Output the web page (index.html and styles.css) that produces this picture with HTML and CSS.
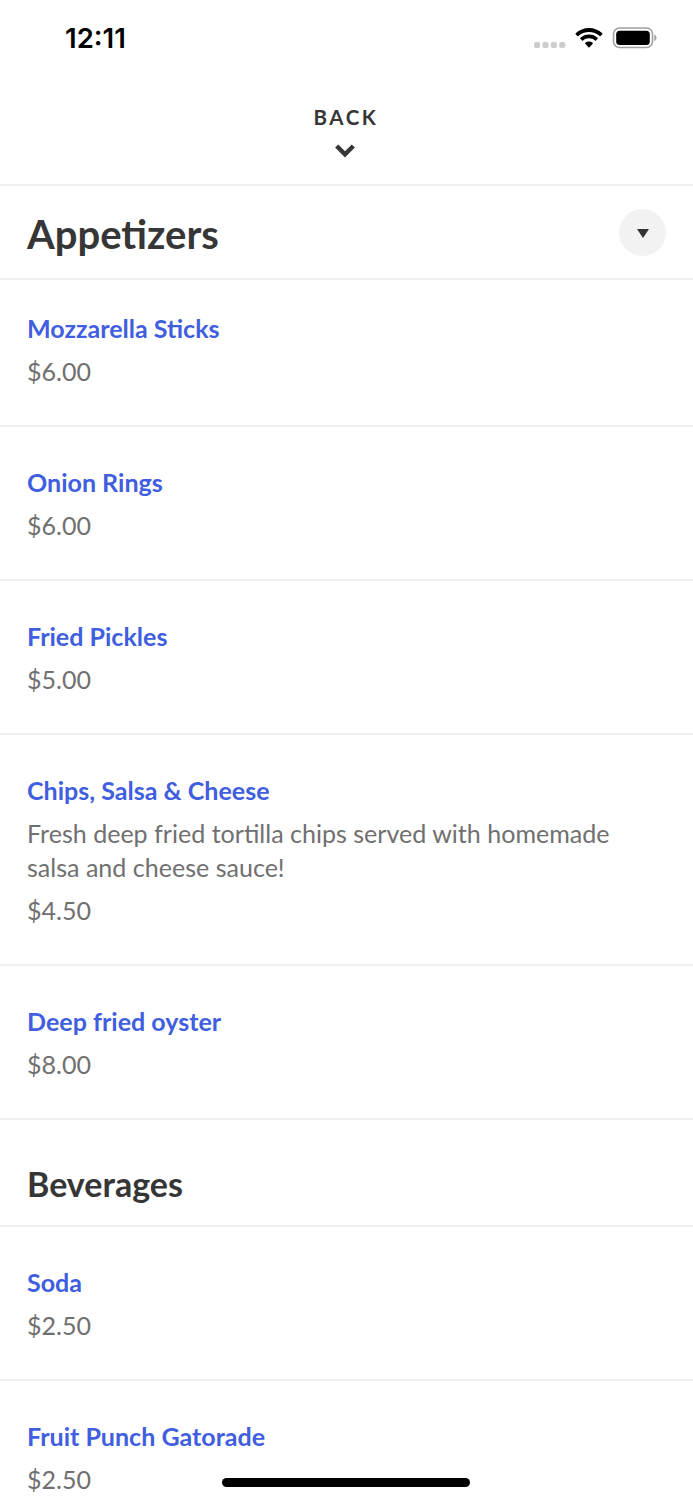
FILE: index.html
```html
<!DOCTYPE html>
<html lang="en">
  <head>
    <meta charset="UTF-8" />
    <meta name="viewport" content="width=device-width, initial-scale=1.0" />
    <title>Menu</title>
    <link rel="stylesheet" href="styles.css">
  </head>
  <body>
    <div class="screen">
      <div class="status-bar">
        <span class="time">12:11</span>
        <div class="status-icons">
          <svg class="signal" width="32" height="6" viewBox="0 0 32 6">
            <rect x="0" y="0" width="6.2" height="6" rx="2" />
            <rect x="8.4" y="0" width="6.2" height="6" rx="2" />
            <rect x="16.8" y="0" width="6.2" height="6" rx="2" />
            <rect x="25.2" y="0" width="6.2" height="6" rx="2" />
          </svg>
          <svg class="wifi" width="28" height="20" viewBox="0 0 28 20">
            <path d="M14 0C8.900 0 4.200 2 .7 5.300q-.5.500 0 1l1.600 1.600q.500.500 1 0C6.200 5.200 10 3.900 14 3.900s7.800 1.300 10.700 4q.500.500 1 0l1.600-1.600q.500-.5 0-1C23.800 2 19.100 0 14 0z" />
            <path d="M14 6.500c-3.300 0-6.300 1.200-8.600 3.300q-.5.500 0 1L7 12.400q.5.500 1 0c1.700-1.400 3.700-2.200 6-2.200s4.300.8 6 2.200q.5.500 1 0l1.600-1.600q.5-.5 0-1c-2.300-2.100-5.300-3.300-8.600-3.300z" />
            <path d="M14 13.500c-1.500 0-2.700.4-3.700 1.200q-.5.500 0 1l3.200 3.600q.5.500 1 0l3.200-3.600q.5-.5 0-1c-1-.8-2.200-1.200-3.700-1.200z" />
          </svg>
          <svg class="battery" width="45" height="22" viewBox="0 0 45 22">
            <rect class="battery-shell" x="1.500" y="1" width="39" height="19.500" rx="6" />
            <rect x="4.200" y="3.700" width="33.600" height="14.300" rx="3.500" />
            <path class="battery-cap" d="M42.300 7.500c3 1.400 3 5.100 0 6.500z" />
          </svg>
        </div>
      </div>

      <div class="back">
        <span>BACK</span>
        <svg width="20" height="14" viewBox="0 0 20 14">
          <path d="M1.700 2l8.300 8.300L18.300 2" />
        </svg>
      </div>

      <div class="category">
        <h1>Appetizers</h1>
        <button class="toggle">
          <svg width="12" height="9" viewBox="0 0 12 9"><path d="M0 0h12L6 9z" /></svg>
        </button>
      </div>

      <div class="item first">
        <h3>Mozzarella Sticks</h3>
        <p>$6.00</p>
      </div>
      <div class="item">
        <h3>Onion Rings</h3>
        <p>$6.00</p>
      </div>
      <div class="item">
        <h3>Fried Pickles</h3>
        <p>$5.00</p>
      </div>
      <div class="item">
        <h3>Chips, Salsa &amp; Cheese</h3>
        <p>Fresh deep fried tortilla chips served with homemade salsa and cheese sauce!</p>
        <p>$4.50</p>
      </div>
      <div class="item">
        <h3>Deep fried oyster</h3>
        <p>$8.00</p>
      </div>

      <h2>Beverages</h2>

      <div class="item">
        <h3>Soda</h3>
        <p>$2.50</p>
      </div>
      <div class="item">
        <h3>Fruit Punch Gatorade</h3>
        <p>$2.50</p>
      </div>

      <div class="home-indicator"></div>
    </div>
  </body>
</html>
```

FILE: styles.css
```css
* {
  box-sizing: border-box;
}
body {
  margin: 0;
  background: #fff;
  color: #363636;
  font-family: Lato, "Open Sans", sans-serif;
}
h1,
h2,
h3,
p {
  margin: 0;
}
.screen {
  position: relative;
  height: 1500px;
  overflow: hidden;
}
.status-bar {
  display: flex;
  justify-content: space-between;
  align-items: center;
  height: 76px;
  padding: 0 36px 0 65px;
}
.time {
  font-family: Inter, sans-serif;
  font-size: 27.5px;
  font-weight: 600;
  color: #000;
}
.status-icons {
  display: flex;
  align-items: center;
}
.signal {
  margin: 13px 9px 0 0;
  fill: #ccc;
}
.wifi {
  margin-right: 9px;
}
.battery-shell {
  fill: none;
  stroke: #a0a0a0;
  stroke-width: 1.6;
}
.battery-cap {
  fill: #a0a0a0;
}
.back {
  display: flex;
  flex-direction: column;
  align-items: center;
  height: 110px;
  padding: 28px 3px 0 0;
  border-bottom: 2px solid #f0f0f0;
  font-size: 20.5px;
  line-height: 26px;
  font-weight: bold;
  letter-spacing: 2.6px;
}
.back span {
  padding-left: 2px;
}
.back svg {
  margin-top: 14px;
  fill: none;
  stroke: #363636;
  stroke-width: 4.4;
}
.category {
  display: flex;
  justify-content: space-between;
  align-items: center;
  height: 94px;
  padding: 0 27px;
  border-bottom: 2px solid #f0f0f0;
}
h1 {
  padding-top: 4px;
  font-size: 40px;
  line-height: 50px;
}
.toggle {
  display: flex;
  justify-content: center;
  align-items: center;
  width: 47px;
  height: 47px;
  padding: 2px 0 0;
  border: none;
  border-radius: 50%;
  background: #f2f2f2;
}
.toggle svg {
  fill: #333;
}
.item {
  padding: 38px 27px 37px;
  border-bottom: 2px solid #f0f0f0;
  font-size: 25.05px;
  line-height: 34px;
}
.item.first {
  padding-top: 31px;
}
.item h3 {
  font-size: 25.05px;
  color: #3f5ee0;
}
.item p {
  margin-top: 9px;
  color: #707070;
}
h2 {
  height: 107px;
  padding: 43px 27px 0;
  border-bottom: 2px solid #f0f0f0;
  font-size: 34px;
  line-height: 42px;
}
.home-indicator {
  position: absolute;
  left: 222px;
  bottom: 13px;
  width: 248px;
  height: 9px;
  border-radius: 5px;
  background: #000;
}
```
